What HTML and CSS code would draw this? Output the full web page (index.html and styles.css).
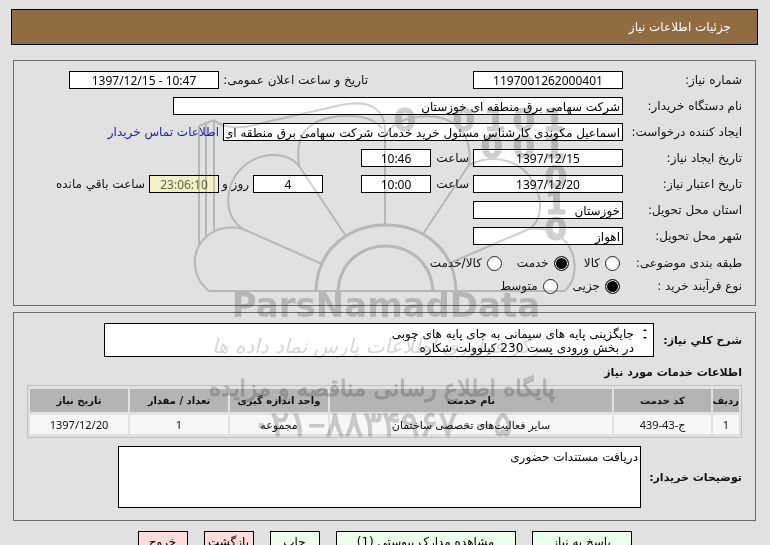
FILE: index.html
```html
<!DOCTYPE html>
<html lang="fa" dir="rtl">
<head>
    <meta charset="UTF-8">
    <meta name="viewport" content="width=device-width, initial-scale=1.0">
    <title>جزئیات اطلاعات نیاز</title>
    <link rel="stylesheet" href="styles.css">
</head>
<body>
    <header class="page-title">
        <h1>جزئیات اطلاعات نیاز</h1>
    </header>

    <main>
        <section class="panel need">
            <div class="row">
                <label class="name" for="needNo">شماره نیاز:</label>
                <input class="medium num" type="text" id="needNo" value="1197001262000401" readonly>
                <label class="announce" for="announceDate">تاریخ و ساعت اعلان عمومی:</label>
                <input class="medium num" type="text" id="announceDate" dir="ltr" value="1397/12/15 - 10:47" readonly>
            </div>
            <div class="row">
                <label class="name" for="buyer">نام دستگاه خریدار:</label>
                <input class="widest" type="text" id="buyer" value="شرکت سهامی برق منطقه ای خوزستان" readonly>
            </div>
            <div class="row">
                <label class="name" for="creator">ایجاد کننده درخواست:</label>
                <input class="wide" type="text" id="creator" value="اسماعیل مکوندی کارشناس مسئول خرید خدمات شرکت سهامی برق منطقه ای خوزستان" readonly>
                <a href="#">اطلاعات تماس خریدار</a>
            </div>
            <div class="row">
                <label class="name" for="createDate">تاریخ ایجاد نیاز:</label>
                <input class="medium num" type="text" id="createDate" value="1397/12/15" readonly>
                <label class="hour" for="createTime">ساعت</label>
                <input class="short num" type="text" id="createTime" value="10:46" readonly>
            </div>
            <div class="row">
                <label class="name" for="expireDate">تاریخ اعتبار نیاز:</label>
                <input class="medium num" type="text" id="expireDate" value="1397/12/20" readonly>
                <label class="hour" for="expireTime">ساعت</label>
                <input class="short num" type="text" id="expireTime" value="10:00" readonly>
                <input class="short num days" type="text" id="days" value="4" readonly>
                <label class="and" for="days">روز و</label>
                <input class="short num countdown" type="text" id="countdown" value="23:06:10" readonly>
                <label for="countdown">ساعت باقي مانده</label>
            </div>
            <div class="row">
                <label class="name" for="province">استان محل تحویل:</label>
                <input class="medium" type="text" id="province" value="خوزستان" readonly>
            </div>
            <div class="row">
                <label class="name" for="city">شهر محل تحویل:</label>
                <input class="medium" type="text" id="city" value="اهواز" readonly>
            </div>
            <div class="row options">
                <span class="name">طبقه بندی موضوعی:</span>
                <label><input type="radio" name="subject">کالا</label>
                <label><input type="radio" name="subject" checked>خدمت</label>
                <label><input type="radio" name="subject">کالا/خدمت</label>
            </div>
            <div class="row options">
                <span class="name">نوع فرآیند خرید :</span>
                <label><input type="radio" name="process" checked>جزیی</label>
                <label><input type="radio" name="process">متوسط</label>
            </div>
        </section>

        <section class="panel details">
            <div class="text-row">
                <label class="summary-label" for="summary">شرح کلي نیاز:</label>
                <div class="summary-box">
                    <svg class="resizer" viewBox="0 0 8 12"><path d="M2 3h4L4 1zM2 9h4L4 11z"/></svg>
                    <textarea id="summary" readonly>جایگزینی پایه های سیمانی به جای پایه های چوبی
در بخش ورودی پست 230 کیلوولت شکاره</textarea>
                </div>
            </div>

            <h2>اطلاعات خدمات مورد نیاز</h2>
            <table class="services">
                <thead>
                    <tr>
                        <th class="c-row">ردیف</th>
                        <th class="c-code">کد خدمت</th>
                        <th>نام خدمت</th>
                        <th class="c-unit">واحد اندازه گیری</th>
                        <th class="c-unit">تعداد / مقدار</th>
                        <th class="c-unit">تاریخ نیاز</th>
                    </tr>
                </thead>
                <tbody>
                    <tr>
                        <td>1</td>
                        <td>ج-43-439</td>
                        <td>سایر فعالیت‌های تخصصی ساختمان</td>
                        <td>مجموعه</td>
                        <td>1</td>
                        <td>1397/12/20</td>
                    </tr>
                </tbody>
            </table>

            <div class="text-row">
                <label class="notes-label" for="notes">توضیحات خریدار:</label>
                <textarea class="notes" id="notes" readonly>دریافت مستندات حضوری</textarea>
            </div>
        </section>
    </main>

    <div class="buttons">
        <button class="b-reply" type="button">پاسخ به نیاز</button>
        <button class="b-files" type="button">مشاهده مدارک پیوستی (1)</button>
        <button type="button">چاپ</button>
        <button class="red" type="button">بازگشت</button>
        <button class="red" type="button">خروج</button>
    </div>

    <svg class="watermark" viewBox="190 90 400 350" aria-hidden="true">
        <g class="lines">
            <path d="M199 245V126M206 236V122M214 230V120M199 126L214 120"/>
            <path d="M214 120C222 128 240 130 262 123L328 108C350 102 366 101 376 109Q385 116 385 130V225"/>
            <path d="M209 291C190 275 189 246 213 232Q226 225 243 229L322 264"/>
            <path d="M243 229C222 215 224 183 245 165C263 151 288 152 299 166L346 236"/>
            <path d="M299 166C295 138 304 124 328 118C350 113 372 116 382 128"/>
            <path d="M387 132C402 114 438 111 456 125C469 136 471 150 469 165L423 234"/>
            <path d="M469 165C496 152 523 162 534 183C544 203 541 222 529 229L450 263"/>
            <path d="M529 229C551 226 568 239 573 255C577 271 573 283 565 291"/>
            <path d="M209 291H565"/>
            <path class="thick" d="M316 291C318 203 454 203 456 291"/>
            <path class="thick" d="M338 291C342 231 429 231 433 291"/>
        </g>
        <g class="binary">
            <text x="405" y="131">0</text>
            <text x="464" y="131">0</text>
            <text x="495" y="131">1</text>
            <text x="524" y="131">0</text>
            <text x="554" y="131">1</text>
            <text x="492" y="158">0</text>
            <text x="524" y="158">0</text>
            <text x="554" y="158">1</text>
            <text x="556" y="188">0</text>
            <text x="556" y="214">1</text>
            <text x="556" y="240">0</text>
        </g>
        <text class="brand" x="386" y="317">ParsNamadData</text>
        <text class="script" x="382" y="353">مرکز فرآوری اطلاعات پارس نماد داده ها</text>
        <text class="tagline" x="382" y="396">پایگاه اطلاع رسانی مناقصه و مزایده</text>
        <text class="phone" x="382" y="436">۰۲۱–۸۸۳۴۹۶۷۰–۵</text>
    </svg>
</body>
</html>
```
FILE: styles.css
```css
* {
    box-sizing: border-box;
}

body {
    position: relative;
    height: 100vh;
    margin: 0;
    padding: 9px 12px 0 11px;
    overflow: hidden;
    background-color: #e1e1e1;
    color: #111;
    font-family: "DejaVu Sans", sans-serif;
    font-size: 12px;
}

input, textarea, button {
    font-family: "DejaVu Sans", sans-serif;
    font-size: 12px;
    color: #000;
}

.page-title {
    padding: 10px 26px;
    background: #8f6d41;
    border: 1px solid #000;
}

.page-title h1 {
    margin: 0;
    color: #fff;
    font-size: 12px;
    font-weight: normal;
    line-height: 14px;
}

main {
    margin: 15px 2px 0;
}

.panel {
    border: 1px solid #6d6d6d;
    padding: 10px 13px 0;
}

.need {
    padding-bottom: 6px;
}

.details {
    margin-top: 6px;
    padding-bottom: 12px;
}

.row {
    display: flex;
    align-items: center;
    height: 18px;
    margin-bottom: 8px;
    white-space: nowrap;
}

.name {
    flex: none;
    width: 119px;
}

.row input[type="text"] {
    height: 18px;
    padding: 1px 2px 0;
    border: 1px solid #000;
    background: #fff;
}

.row .num {
    font-family: "Noto Sans", sans-serif;
    text-align: center;
}

.medium {
    width: 150px;
}

.wide {
    width: 400px;
}

.widest {
    width: 450px;
}

.short {
    width: 70px;
}

.announce {
    width: 145px;
    margin: 0 105px 0 4px;
}

.row a {
    margin-right: 4px;
    color: #1c1cb0;
    text-decoration: none;
}

.hour {
    width: 34px;
    margin: 0 4px;
}

.days {
    margin-right: 38px;
}

.and {
    width: 26px;
    margin: 0 4px;
}

.row input.countdown {
    margin-left: 4px;
    background: #f3f1c8;
    color: #666640;
}

.options {
    height: 20px;
    margin-bottom: 3px;
}

.options label {
    display: flex;
    align-items: center;
    gap: 5px;
    margin: 0 3px 0 12px;
}

.options input {
    appearance: none;
    width: 15px;
    height: 15px;
    margin: 0;
    border: 1px solid #222;
    border-radius: 50%;
    background: #fff;
}

.options input:checked {
    background: #000;
    box-shadow: inset 0 0 0 1px #fff;
}

.text-row {
    display: flex;
    align-items: center;
    gap: 4px;
}

.text-row label {
    flex: none;
    font-size: 11px;
    font-weight: bold;
    white-space: nowrap;
}

.summary-label {
    width: 84px;
}

.notes-label {
    width: 97px;
}

.summary-box {
    display: flex;
    width: 550px;
    height: 34px;
    background: #fff;
    border: 1px solid #000;
}

.resizer {
    width: 8px;
    height: 12px;
    margin: 4px 4px 0 7px;
}

textarea {
    flex: 1;
    padding: 3px 0 0;
    border: 0;
    background: #fff;
    line-height: 14px;
    overflow: hidden;
    resize: none;
}

.details h2 {
    margin: 8px 0 4px;
    font-size: 11px;
    line-height: 16px;
}

.services {
    width: 100%;
    margin-bottom: 8px;
    border: 1px solid #c0c0c0;
    border-spacing: 2px 3px;
    table-layout: fixed;
    text-align: center;
}

.services th {
    height: 23px;
    padding: 0;
    background: #b4b4b4;
    font-size: 10px;
    white-space: nowrap;
}

.services td {
    height: 19px;
    padding: 0;
    background: #f7f7f7;
    font-family: "Noto Sans", "DejaVu Sans", sans-serif;
    font-size: 11px;
    line-height: 16px;
}

.c-row {
    width: 26px;
}

.c-code {
    width: 97px;
}

.c-unit {
    width: 98px;
}

.notes {
    flex: none;
    width: 523px;
    height: 62px;
    padding: 3px 2px;
    border: 1px solid #000;
}

.buttons {
    display: flex;
    justify-content: center;
    gap: 16px;
    margin-top: 10px;
}

button {
    width: 50px;
    height: 22px;
    padding: 0;
    border: 1px solid #000;
    background: #edffed;
    white-space: nowrap;
}

.b-reply {
    width: 100px;
}

.b-files {
    width: 180px;
}

.red {
    background: #ffdcdc;
}

/* logo stamped over the page */
.watermark {
    position: absolute;
    top: 90px;
    left: calc(50% - 195px);
    width: 400px;
    height: 350px;
    mix-blend-mode: multiply;
    pointer-events: none;
    fill: #cfcfcf;
    text-anchor: middle;
    font-family: "DejaVu Sans", sans-serif;
}

.lines {
    fill: none;
    stroke: #d0d0d0;
    stroke-width: 2;
}

.thick {
    stroke-width: 3;
}

.binary {
    font-size: 32px;
    font-weight: bold;
    stroke: #cfcfcf;
}

.brand {
    direction: ltr;
    font-size: 34px;
    font-weight: bold;
}

.script {
    font-size: 20px;
    font-style: italic;
    fill: #d6d6d6;
}

.tagline {
    font-size: 23px;
    stroke: #cfcfcf;
}

.phone {
    direction: ltr;
    font-size: 35px;
    stroke: #cfcfcf;
}
```
